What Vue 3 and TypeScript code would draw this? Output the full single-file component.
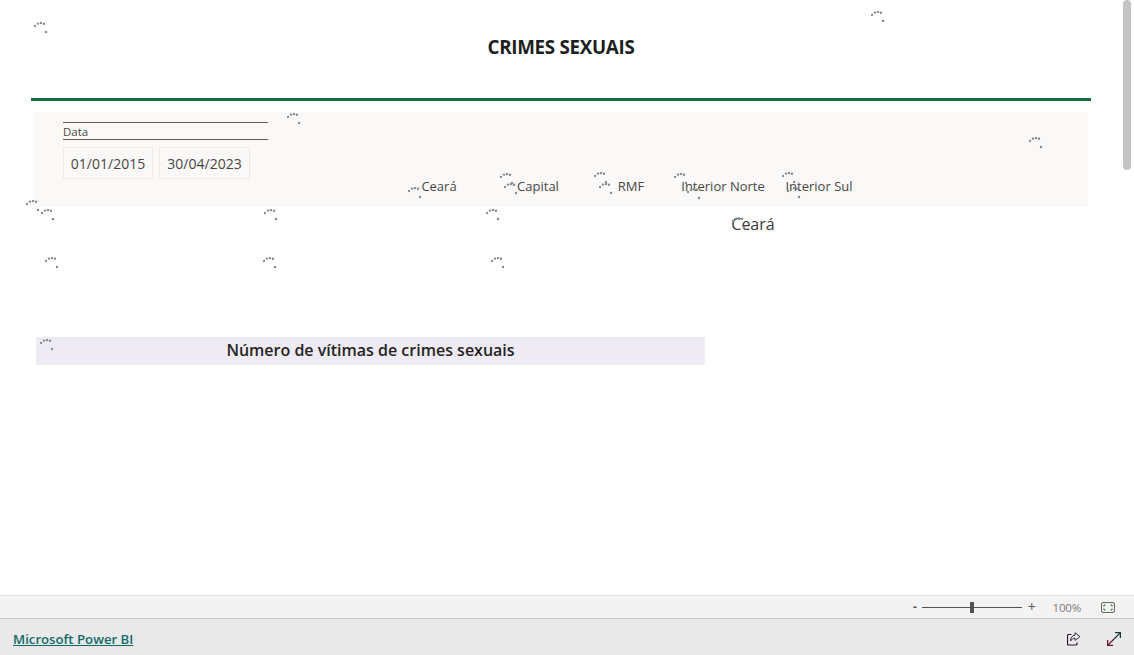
<template>
  <div class="page">
    <main class="report">
      <div class="canvas">
        <h1 class="title">CRIMES SEXUAIS</h1>
        <div class="rule"></div>

        <section class="filters">
          <div class="slicer">
            <div class="slicer-head">Data</div>
            <div class="dates">
              <span v-for="d in dates" :key="d" class="date">{{ d }}</span>
            </div>
          </div>
          <div class="tabs">
            <span v-for="t in tabs" :key="t" class="tab">{{ t }}</span>
          </div>
        </section>

        <div class="region-row">
          <span class="region">Ceará</span>
        </div>

        <div class="band">Número de vítimas de crimes sexuais</div>
      </div>

      <div class="scrollbar"><div class="thumb"></div></div>

      <!-- visuals still loading -->
      <svg
        v-for="(s, i) in spinners"
        :key="i"
        class="spinner"
        :style="{ left: s[0] + 'px', top: s[1] + 'px' }"
        width="14"
        height="12"
        viewBox="0 0 14 12"
      >
        <circle cx="1" cy="4" r="1.2" />
        <circle cx="4" cy="1.600" r="1.200" />
        <circle cx="7" cy="1" r="1.200" />
        <circle cx="10" cy="1.800" r="1.200" />
        <circle cx="12" cy="10" r="1.200" />
      </svg>
    </main>

    <div class="zoombar">
      <span class="zoom-sign">-</span>
      <div class="slider"><div class="knob"></div></div>
      <span class="zoom-sign plus">+</span>
      <span class="pct">100%</span>
      <svg class="fit" width="14" height="11" viewBox="0 0 14 11" fill="none">
        <rect x="0.5" y="0.5" width="13" height="10" rx="1.500" stroke="#5c6650" />
        <path d="M3 4.500V3h1.500M9.500 3H11v1.500M3 6.500V8h1.500M9.500 8H11V6.500" stroke="#3f6a58" />
      </svg>
    </div>

    <footer class="footer">
      <a class="brand" href="#">Microsoft Power BI</a>
      <div class="actions">
        <svg width="14" height="14" viewBox="0 0 14 14" fill="none">
          <path d="M4.500 2.500H1.500a1 1 0 0 0-1 1v8.500a1 1 0 0 0 1 1h7.500a1 1 0 0 0 1-1V10.500" stroke="#2a1230" stroke-width="1.200" />
          <path d="M8 0.800 13 4.600 8 8.400V6.400C6 6.400 4.500 7.200 3.500 9 3.500 5.800 5.300 3.400 8 3z" stroke="#332a3a" stroke-width="1" stroke-linejoin="round" />
        </svg>
        <svg width="14" height="14" viewBox="0 0 14 14" fill="none">
          <path d="M8 .6h5.400V6M13.400.6 7 7" stroke="#14393a" stroke-width="1.200" />
          <path d="M6 13.400H.6V8M.6 13.400 7 7" stroke="#6a0f2c" stroke-width="1.200" />
        </svg>
      </div>
    </footer>
  </div>
</template>

<script setup lang="ts">
const dates = ['01/01/2015', '30/04/2023']
const tabs = ['Ceará', 'Capital', 'RMF', 'Interior Norte', 'Interior Sul']

// Top left corner of each loading spinner
const spinners: [number, number][] = [
  [34, 22], [871, 11], [287, 113], [1029, 137],
  [26, 200], [41, 209], [264, 209], [486, 209],
  [45, 257], [263, 257], [491, 257], [40, 339],
  [408, 187], [500, 173], [504, 183], [594, 172], [599, 183],
  [674, 173], [687, 188], [782, 172], [787, 187], [732, 217]
]
</script>

<style>
html,
body {
  margin: 0;
  overflow: hidden;
}
</style>

<style scoped>
.page {
  width: 1134px;
  height: 655px;
  display: flex;
  flex-direction: column;
  font-family: "Open Sans", "Noto Sans", sans-serif;
  color: #252423;
  background: #fff;
}

.report {
  position: relative;
  flex: 0 0 595px;
  display: flex;
  overflow: hidden;
}

.canvas {
  flex: 1;
  padding: 0 0 0 31px;
}

.title {
  margin: 0;
  height: 98px;
  width: 1060px;
  box-sizing: border-box;
  padding-top: 35px;
  text-align: center;
  font-size: 18.800px;
  line-height: 24px;
  font-weight: 700;
  letter-spacing: -0.3px;
  color: #201f1e;
}

.rule {
  width: 1060px;
  height: 3px;
  background: #0f7040;
}

.filters {
  margin: 11px 0 0 2px;
  width: 1055px;
  height: 95px;
  box-sizing: border-box;
  background: #faf9f8;
  display: flex;
  padding: 10px 0 0 30px;
}

.slicer {
  width: 205px;
  flex: none;
}

.slicer-head {
  height: 16px;
  border-top: 1px solid #605e5c;
  border-bottom: 1px solid #605e5c;
  font-size: 11.500px;
  line-height: 18px;
  color: #484644;
}

.dates {
  display: flex;
  gap: 6px;
  margin-top: 7px;
  width: 240px;
}

.date {
  box-sizing: border-box;
  height: 32px;
  width: 90px;
  flex: none;
  border: 1px solid #edebe9;
  font-size: 14px;
  line-height: 32px;
  text-align: center;
  color: #484644;
}

.date + .date {
  width: 91px;
}

.tabs {
  display: grid;
  grid-template-columns: 98px 100px 86px 98px 94px;
  margin-left: 122px;
  padding-top: 54px;
  height: 20px;
}

.tab {
  text-align: center;
  font-size: 13px;
  line-height: 21px;
  color: #484644;
  white-space: nowrap;
}

.region-row {
  margin-left: 690px;
  width: 64px;
  margin-top: 6px;
  height: 22px;
  text-align: center;
}

.region {
  font-size: 16px;
  line-height: 22px;
  color: #3b3a39;
}

.band {
  margin: 102px 0 0 5px;
  width: 669px;
  height: 28px;
  background: #eeebf4;
  font-size: 16px;
  font-weight: 600;
  line-height: 26px;
  text-align: center;
  color: #252423;
}

.scrollbar {
  width: 10px;
  margin-right: 1px;
  flex: none;
}

.thumb {
  width: 8px;
  height: 170px;
  border-radius: 4px;
  background: #c4c4c4;
}

.spinner {
  position: absolute;
  fill: #8a8a8c;
}

.zoombar {
  flex: 0 0 24px;
  box-sizing: border-box;
  background: #f3f3f3;
  border-top: 1px solid #e3e3e3;
  border-bottom: 1px solid #c8c8c8;
  display: flex;
  align-items: center;
  padding: 0 19px 0 913px;
  font-size: 12px;
  color: #605e5c;
}

.zoom-sign {
  width: 9px;
  font-weight: 700;
  color: #555;
  line-height: 20px;
}

.zoom-sign.plus {
  font-weight: 400;
  margin-left: 6px;
  font-size: 14px;
}

.slider {
  width: 100px;
  height: 1px;
  background: #555;
  position: relative;
}

.knob {
  position: absolute;
  left: 48px;
  top: -5px;
  width: 4px;
  height: 11px;
  background: #555;
}

.pct {
  margin-left: 16px;
  font-size: 11.500px;
  letter-spacing: -0.2px;
  color: #7a7a7a;
}

.fit {
  margin-left: 20px;
}

.footer {
  flex: 1;
  background: #e9e9e9;
  display: flex;
  align-items: center;
  justify-content: space-between;
  padding: 4px 13px 0 13px;
}

.brand {
  font-size: 13.200px;
  font-weight: 600;
  color: #14696b;
  text-decoration: underline;
}

.actions {
  display: flex;
  gap: 26px;
}
</style>
